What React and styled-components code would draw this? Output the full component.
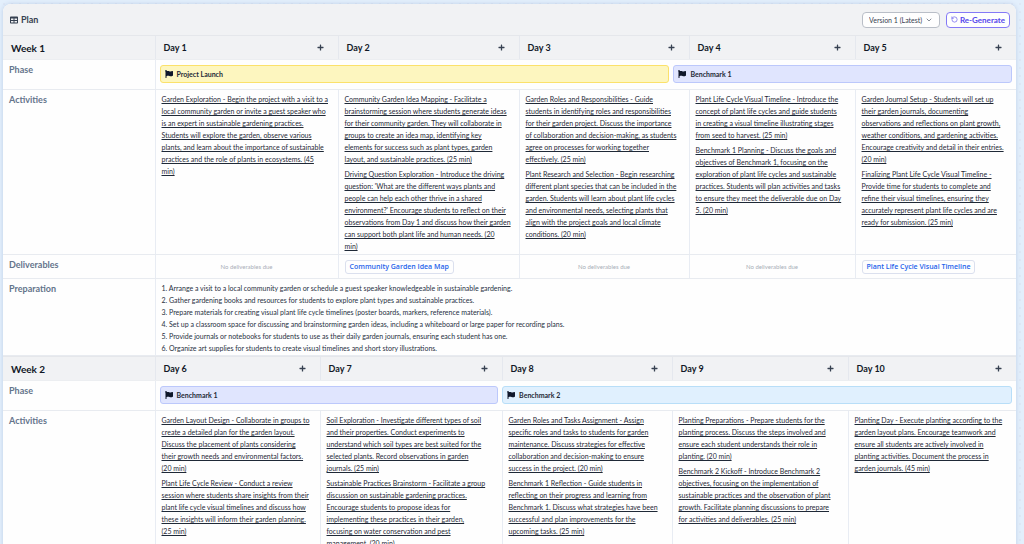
import React from 'react';
import styled, { createGlobalStyle } from 'styled-components';
import { FaFlag, FaTable, FaPlus } from 'react-icons/fa';
import { FiChevronDown } from 'react-icons/fi';
import { LuRotateCcw } from 'react-icons/lu';

const GlobalStyle = createGlobalStyle`
  * {
    box-sizing: border-box;
  }

  body {
    margin: 0;
    color: #111827;
    font-family: Lato, 'Open Sans', sans-serif;
    font-size: 7px;
    line-height: 12px;
  }
`;

const Page = styled.main`
  height: 100vh;
  padding: 4px 8px 0 3px;
  overflow-y: auto;
  scrollbar-width: none;
  background-color: #e3effc;
  background-image: radial-gradient(#dfe8f6 1px, transparent 1px);
  background-size: 8px 8px;
`;

const Card = styled.section`
  overflow: hidden;
  border-radius: 8px 8px 0 0;
  background: #fefefe;
  box-shadow: 0 0 4px rgba(100, 130, 180, 0.3);
`;

const Toolbar = styled.header`
  display: flex;
  align-items: center;
  justify-content: space-between;
  height: 31px;
  padding: 0 6px 0 7px;
  background: #f1f2f4;
`;

const Title = styled.h1`
  display: flex;
  align-items: center;
  gap: 3px;
  margin: 0;
  color: #374151;
  font-size: 9px;
  font-weight: 700;
`;

const Actions = styled.div`
  display: flex;
  gap: 6px;
`;

const SelectWrap = styled.label`
  display: flex;
  align-items: center;
  position: relative;
  color: #4b5563;

  svg {
    position: absolute;
    right: 7px;
    pointer-events: none;
  }
`;

const VersionSelect = styled.select`
  width: 78px;
  height: 16px;
  padding: 0 0 0 6px;
  appearance: none;
  border: 1px solid #b9bec7;
  border-radius: 4px;
  background: #fefefe;
  color: #374151;
  font: inherit;
`;

const RegenerateButton = styled.button`
  display: flex;
  align-items: center;
  justify-content: center;
  gap: 2px;
  width: 64px;
  height: 16px;
  padding: 0;
  border: 1px solid #8479f6;
  border-radius: 4px;
  background: #fefefe;
  color: #5545ec;
  font: inherit;
  font-size: 8px;
  font-weight: 700;
`;

const WeekTable = styled.table`
  width: 100%;
  table-layout: fixed;
  border-collapse: collapse;
`;

const Column = styled.col`
  width: ${({ $width }) => $width}px;
`;

const HeadCell = styled.th`
  height: 24px;
  padding: 0 8px;
  border-top: 1px solid #e5e7eb;
  border-bottom: 1px solid #eceef1;
  background: #f1f2f4;
  color: #111827;
  font-size: ${({ $week }) => ($week ? '10px' : '9px')};
  font-weight: 700;
  text-align: left;

  & + & {
    border-left: 1px solid #e5e8ee;
  }
`;

const DayHead = styled.div`
  display: flex;
  align-items: center;
  justify-content: space-between;
  padding-right: 6px;
`;

const AddButton = styled.button`
  display: flex;
  padding: 0;
  border: 0;
  background: none;
  color: #374151;
`;

const RowLabel = styled.th`
  padding: 4px 6px;
  border-bottom: 1px solid #e8ebf0;
  color: #64748b;
  font-size: 9px;
  font-weight: 700;
  text-align: left;
  vertical-align: top;
`;

const Cell = styled.td`
  height: ${({ $height }) => $height || 'auto'};
  padding: ${({ $padding }) => $padding || '3px 6px 1px'};
  border-bottom: 1px solid #e8ebf0;
  border-left: 1px solid #e8ecf3;
  vertical-align: top;
`;

const PhaseGrid = styled.div`
  display: grid;
  grid-template-columns: repeat(5, 1fr);
  gap: 4px;
`;

const phaseColors = {
  yellow: ['#fdf6bf', '#fbe16b'],
  indigo: ['#e0e5fe', '#bcc8fb'],
  sky: ['#e0f0fe', '#b8def8'],
};

const Phase = styled.div`
  display: flex;
  align-items: center;
  gap: 4px;
  grid-column: span ${({ $span }) => $span};
  height: 18px;
  padding: 0 4px;
  border: 1px solid ${({ $color }) => phaseColors[$color][1]};
  border-radius: 3px;
  background: ${({ $color }) => phaseColors[$color][0]};
  color: #1f2937;
  font-weight: 700;

  svg {
    color: #0f172a;
  }
`;

const Activity = styled.p`
  margin: 0 0 3px;
  color: #1f2937;
  text-decoration: underline;
  white-space: pre-line;

  &:last-child {
    margin-bottom: 0;
  }
`;

const Deliverable = styled.a`
  display: inline-block;
  height: 14px;
  padding: 0 4px;
  border: 1px solid #dbe0ee;
  border-radius: 3px;
  color: #2563eb;
  font-family: 'Open Sans', sans-serif;
  font-weight: 600;
  text-decoration: none;
  white-space: nowrap;
`;

const NoDeliverable = styled.p`
  margin: 1px 0 0;
  color: #a9aeb8;
  font-size: 6px;
  text-align: center;
`;

const PrepLine = styled.p`
  margin: 0;
  color: #27303f;
`;

const weeks = [
  {
    name: 'Week 1',
    widths: [152, 183, 181, 170, 166, 161],
    phases: [
      { name: 'Project Launch', color: 'yellow', span: 3 },
      { name: 'Benchmark 1', color: 'indigo', span: 2 },
    ],
    days: [
      {
        name: 'Day 1',
        activities: [
          'Garden Exploration - Begin the project with a visit to a\nlocal community garden or invite a guest speaker who\nis an expert in sustainable gardening practices.\nStudents will explore the garden, observe various\nplants, and learn about the importance of sustainable\npractices and the role of plants in ecosystems. (45\nmin)',
        ],
      },
      {
        name: 'Day 2',
        deliverable: 'Community Garden Idea Map',
        activities: [
          'Community Garden Idea Mapping - Facilitate a\nbrainstorming session where students generate ideas\nfor their community garden. They will collaborate in\ngroups to create an idea map, identifying key\nelements for success such as plant types, garden\nlayout, and sustainable practices. (25 min)',
          "Driving Question Exploration - Introduce the driving\nquestion: 'What are the different ways plants and\npeople can help each other thrive in a shared\nenvironment?' Encourage students to reflect on their\nobservations from Day 1 and discuss how their garden\ncan support both plant life and human needs. (20\nmin)",
        ],
      },
      {
        name: 'Day 3',
        activities: [
          'Garden Roles and Responsibilities - Guide\nstudents in identifying roles and responsibilities\nfor their garden project. Discuss the importance\nof collaboration and decision-making, as students\nagree on processes for working together\neffectively. (25 min)',
          'Plant Research and Selection - Begin researching\ndifferent plant species that can be included in the\ngarden. Students will learn about plant life cycles\nand environmental needs, selecting plants that\nalign with the project goals and local climate\nconditions. (20 min)',
        ],
      },
      {
        name: 'Day 4',
        activities: [
          'Plant Life Cycle Visual Timeline - Introduce the\nconcept of plant life cycles and guide students\nin creating a visual timeline illustrating stages\nfrom seed to harvest. (25 min)',
          'Benchmark 1 Planning - Discuss the goals and\nobjectives of Benchmark 1, focusing on the\nexploration of plant life cycles and sustainable\npractices. Students will plan activities and tasks\nto ensure they meet the deliverable due on Day\n5. (20 min)',
        ],
      },
      {
        name: 'Day 5',
        deliverable: 'Plant Life Cycle Visual Timeline',
        activities: [
          'Garden Journal Setup - Students will set up\ntheir garden journals, documenting\nobservations and reflections on plant growth,\nweather conditions, and gardening activities.\nEncourage creativity and detail in their entries.\n(20 min)',
          'Finalizing Plant Life Cycle Visual Timeline -\nProvide time for students to complete and\nrefine their visual timelines, ensuring they\naccurately represent plant life cycles and are\nready for submission. (25 min)',
        ],
      },
    ],
    preparation: [
      'Arrange a visit to a local community garden or schedule a guest speaker knowledgeable in sustainable gardening.',
      'Gather gardening books and resources for students to explore plant types and sustainable practices.',
      'Prepare materials for creating visual plant life cycle timelines (poster boards, markers, reference materials).',
      'Set up a classroom space for discussing and brainstorming garden ideas, including a whiteboard or large paper for recording plans.',
      'Provide journals or notebooks for students to use as their daily garden journals, ensuring each student has one.',
      'Organize art supplies for students to create visual timelines and short story illustrations.',
    ],
  },
  {
    name: 'Week 2',
    widths: [152, 165, 182, 170, 176, 168],
    phases: [
      { name: 'Benchmark 1', color: 'indigo', span: 2 },
      { name: 'Benchmark 2', color: 'sky', span: 3 },
    ],
    days: [
      {
        name: 'Day 6',
        activities: [
          'Garden Layout Design - Collaborate in groups to\ncreate a detailed plan for the garden layout.\nDiscuss the placement of plants considering\ntheir growth needs and environmental factors.\n(20 min)',
          'Plant Life Cycle Review - Conduct a review\nsession where students share insights from their\nplant life cycle visual timelines and discuss how\nthese insights will inform their garden planning.\n(25 min)',
        ],
      },
      {
        name: 'Day 7',
        activities: [
          'Soil Exploration - Investigate different types of soil\nand their properties. Conduct experiments to\nunderstand which soil types are best suited for the\nselected plants. Record observations in garden\njournals. (25 min)',
          'Sustainable Practices Brainstorm - Facilitate a group\ndiscussion on sustainable gardening practices.\nEncourage students to propose ideas for\nimplementing these practices in their garden,\nfocusing on water conservation and pest\nmanagement. (20 min)',
        ],
      },
      {
        name: 'Day 8',
        activities: [
          'Garden Roles and Tasks Assignment - Assign\nspecific roles and tasks to students for garden\nmaintenance. Discuss strategies for effective\ncollaboration and decision-making to ensure\nsuccess in the project. (20 min)',
          'Benchmark 1 Reflection - Guide students in\nreflecting on their progress and learning from\nBenchmark 1. Discuss what strategies have been\nsuccessful and plan improvements for the\nupcoming tasks. (25 min)',
        ],
      },
      {
        name: 'Day 9',
        activities: [
          'Planting Preparations - Prepare students for the\nplanting process. Discuss the steps involved and\nensure each student understands their role in\nplanting. (20 min)',
          'Benchmark 2 Kickoff - Introduce Benchmark 2\nobjectives, focusing on the implementation of\nsustainable practices and the observation of plant\ngrowth. Facilitate planning discussions to prepare\nfor activities and deliverables. (25 min)',
        ],
      },
      {
        name: 'Day 10',
        activities: [
          'Planting Day - Execute planting according to the\ngarden layout plans. Encourage teamwork and\nensure all students are actively involved in\nplanting activities. Document the process in\ngarden journals. (45 min)',
        ],
      },
    ],
  },
];

const Week = ({ week }) => (
  <WeekTable>
    <colgroup>
      {week.widths.map((width, index) => (
        <Column key={index} $width={width} />
      ))}
    </colgroup>
    <thead>
      <tr>
        <HeadCell $week scope="col">{week.name}</HeadCell>
        {week.days.map((day) => (
          <HeadCell key={day.name} scope="col">
            <DayHead>
              {day.name}
              <AddButton type="button" aria-label={`Add activity to ${day.name}`}>
                <FaPlus size={7} />
              </AddButton>
            </DayHead>
          </HeadCell>
        ))}
      </tr>
    </thead>
    <tbody>
      <tr>
        <RowLabel scope="row">Phase</RowLabel>
        <Cell colSpan={5} $height="30px" $padding="5px 4px 0">
          <PhaseGrid>
            {week.phases.map((phase) => (
              <Phase key={phase.name} $span={phase.span} $color={phase.color}>
                <FaFlag size={8} />
                {phase.name}
              </Phase>
            ))}
          </PhaseGrid>
        </Cell>
      </tr>
      <tr>
        <RowLabel scope="row">Activities</RowLabel>
        {week.days.map((day) => (
          <Cell key={day.name} $padding="3px 6px 2px">
            {day.activities.map((activity, index) => (
              <Activity key={index}>{activity}</Activity>
            ))}
          </Cell>
        ))}
      </tr>
      {week.preparation && (
        <>
          <tr>
            <RowLabel scope="row">Deliverables</RowLabel>
            {week.days.map((day) => (
              <Cell key={day.name} $height="24px" $padding="5px 6px 0">
                {day.deliverable ? (
                  <Deliverable href="#">{day.deliverable}</Deliverable>
                ) : (
                  <NoDeliverable>No deliverables due</NoDeliverable>
                )}
              </Cell>
            ))}
          </tr>
          <tr>
            <RowLabel scope="row">Preparation</RowLabel>
            <Cell colSpan={5}>
              {week.preparation.map((step, index) => (
                <PrepLine key={index}>{index + 1}. {step}</PrepLine>
              ))}
            </Cell>
          </tr>
        </>
      )}
    </tbody>
  </WeekTable>
);

const App = () => (
  <>
    <GlobalStyle />
    <Page>
      <Card>
        <Toolbar>
          <Title>
            <FaTable size={8} />
            Plan
          </Title>
          <Actions>
            <SelectWrap>
              <VersionSelect aria-label="Plan version" defaultValue="1">
                <option value="1">Version 1 (Latest)</option>
              </VersionSelect>
              <FiChevronDown size={8} />
            </SelectWrap>
            <RegenerateButton type="button">
              <LuRotateCcw size={7} />
              Re-Generate
            </RegenerateButton>
          </Actions>
        </Toolbar>
        {weeks.map((week) => (
          <Week key={week.name} week={week} />
        ))}
      </Card>
    </Page>
  </>
);

export default App;
